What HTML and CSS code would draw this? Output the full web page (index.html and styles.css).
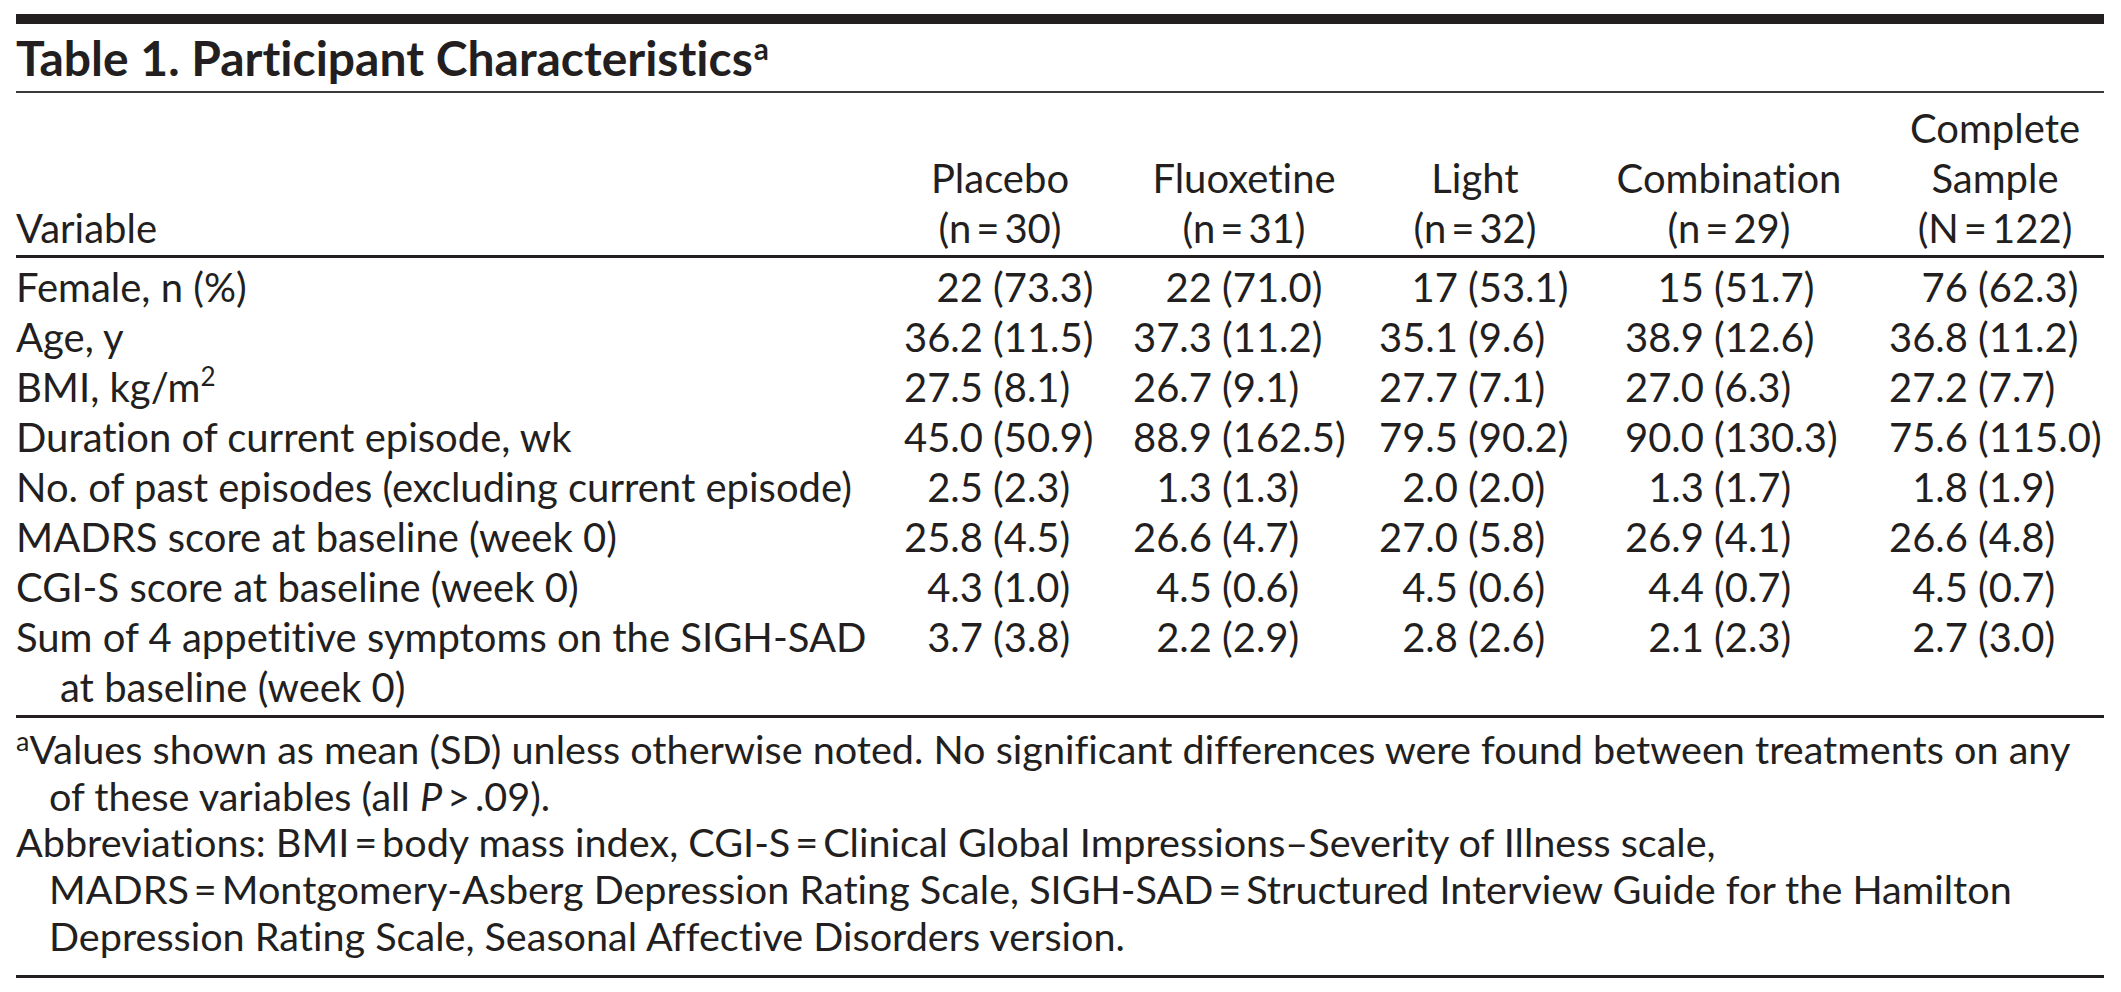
FILE: index.html
```html
<!DOCTYPE html>
<html lang="en">
<head>
<meta charset="utf-8">
<title>Table 1. Participant Characteristics</title>
<link rel="stylesheet" href="styles.css">
</head>
<body>
<div class="table">
  <div class="topbar"></div>
  <h1 class="title">Table 1. Participant Characteristics<sup class="tsup">a</sup></h1>

  <div class="row head">
    <div class="hvar">Variable</div>
    <div class="hcol">Placebo<br>(n&#8201;=&#8201;30)</div>
    <div class="hcol">Fluoxetine<br>(n&#8201;=&#8201;31)</div>
    <div class="hcol">Light<br>(n&#8201;=&#8201;32)</div>
    <div class="hcol">Combination<br>(n&#8201;=&#8201;29)</div>
    <div class="hcol">Complete<br>Sample<br>(N&#8201;=&#8201;122)</div>
  </div>

  <div class="body">
    <div class="row">
      <div class="var">Female, n (%)</div>
      <div class="num c1"><span class="m">22</span><span class="s">(73.3)</span></div>
      <div class="num c2"><span class="m">22</span><span class="s">(71.0)</span></div>
      <div class="num c3"><span class="m">17</span><span class="s">(53.1)</span></div>
      <div class="num c4"><span class="m">15</span><span class="s">(51.7)</span></div>
      <div class="num c5"><span class="m">76</span><span class="s">(62.3)</span></div>
    </div>
    <div class="row">
      <div class="var">Age, y</div>
      <div class="num c1"><span class="m">36.2</span><span class="s">(11.5)</span></div>
      <div class="num c2"><span class="m">37.3</span><span class="s">(11.2)</span></div>
      <div class="num c3"><span class="m">35.1</span><span class="s">(9.6)</span></div>
      <div class="num c4"><span class="m">38.9</span><span class="s">(12.6)</span></div>
      <div class="num c5"><span class="m">36.8</span><span class="s">(11.2)</span></div>
    </div>
    <div class="row">
      <div class="var">BMI, kg/m<sup class="vsup">2</sup></div>
      <div class="num c1"><span class="m">27.5</span><span class="s">(8.1)</span></div>
      <div class="num c2"><span class="m">26.7</span><span class="s">(9.1)</span></div>
      <div class="num c3"><span class="m">27.7</span><span class="s">(7.1)</span></div>
      <div class="num c4"><span class="m">27.0</span><span class="s">(6.3)</span></div>
      <div class="num c5"><span class="m">27.2</span><span class="s">(7.7)</span></div>
    </div>
    <div class="row">
      <div class="var">Duration of current episode, wk</div>
      <div class="num c1"><span class="m">45.0</span><span class="s">(50.9)</span></div>
      <div class="num c2"><span class="m">88.9</span><span class="s">(162.5)</span></div>
      <div class="num c3"><span class="m">79.5</span><span class="s">(90.2)</span></div>
      <div class="num c4"><span class="m">90.0</span><span class="s">(130.3)</span></div>
      <div class="num c5"><span class="m">75.6</span><span class="s">(115.0)</span></div>
    </div>
    <div class="row">
      <div class="var">No. of past episodes (excluding current episode)</div>
      <div class="num c1"><span class="m">2.5</span><span class="s">(2.3)</span></div>
      <div class="num c2"><span class="m">1.3</span><span class="s">(1.3)</span></div>
      <div class="num c3"><span class="m">2.0</span><span class="s">(2.0)</span></div>
      <div class="num c4"><span class="m">1.3</span><span class="s">(1.7)</span></div>
      <div class="num c5"><span class="m">1.8</span><span class="s">(1.9)</span></div>
    </div>
    <div class="row">
      <div class="var">MADRS score at baseline (week 0)</div>
      <div class="num c1"><span class="m">25.8</span><span class="s">(4.5)</span></div>
      <div class="num c2"><span class="m">26.6</span><span class="s">(4.7)</span></div>
      <div class="num c3"><span class="m">27.0</span><span class="s">(5.8)</span></div>
      <div class="num c4"><span class="m">26.9</span><span class="s">(4.1)</span></div>
      <div class="num c5"><span class="m">26.6</span><span class="s">(4.8)</span></div>
    </div>
    <div class="row">
      <div class="var">CGI-S score at baseline (week 0)</div>
      <div class="num c1"><span class="m">4.3</span><span class="s">(1.0)</span></div>
      <div class="num c2"><span class="m">4.5</span><span class="s">(0.6)</span></div>
      <div class="num c3"><span class="m">4.5</span><span class="s">(0.6)</span></div>
      <div class="num c4"><span class="m">4.4</span><span class="s">(0.7)</span></div>
      <div class="num c5"><span class="m">4.5</span><span class="s">(0.7)</span></div>
    </div>
    <div class="row">
      <div class="var hang">Sum of 4 appetitive symptoms on the SIGH-SAD<br>at baseline (week 0)</div>
      <div class="num c1"><span class="m">3.7</span><span class="s">(3.8)</span></div>
      <div class="num c2"><span class="m">2.2</span><span class="s">(2.9)</span></div>
      <div class="num c3"><span class="m">2.8</span><span class="s">(2.6)</span></div>
      <div class="num c4"><span class="m">2.1</span><span class="s">(2.3)</span></div>
      <div class="num c5"><span class="m">2.7</span><span class="s">(3.0)</span></div>
    </div>
  </div>

  <div class="notes">
    <p class="note"><sup class="nsup">a</sup>Values shown as mean (SD) unless otherwise noted. No significant differences were found between treatments on any<br>of these variables (all <i>P</i>&#8201;&gt;&#8201;.09).</p>
    <p class="note">Abbreviations: BMI&#8201;=&#8201;body mass index, CGI-S&#8201;=&#8201;Clinical Global Impressions–Severity of Illness scale,<br>MADRS&#8201;=&#8201;Montgomery-Asberg Depression Rating Scale, SIGH-SAD&#8201;=&#8201;Structured Interview Guide for the Hamilton<br>Depression Rating Scale, Seasonal Affective Disorders version.</p>
  </div>
</div>
</body>
</html>
```
FILE: styles.css
```css
html, body {
  margin: 0;
  padding: 0;
  background: #ffffff;
}

body {
  color: #231f20;
  font-family: "Lato", "Liberation Sans", sans-serif;
  font-size: 40px;
  font-variant-numeric: tabular-nums lining-nums;
  font-variant-ligatures: no-common-ligatures no-discretionary-ligatures;
  font-feature-settings: "liga" 0, "clig" 0, "dlig" 0;
}

.table {
  width: 2088px;
  margin-left: 16px;
  padding-top: 14px;
}

.topbar {
  height: 10px;
  background: #231f20;
}

.title {
  margin: 4px 0 0 0;
  padding-bottom: 3px;
  font-size: 48px;
  line-height: 60px;
  font-weight: 700;
  border-bottom: 2px solid #3a3a3a;
  white-space: nowrap;
}

.tsup {
  font-size: 0.62em;
  line-height: 0;
  vertical-align: 0.55em;
  font-weight: 700;
  margin-left: 1px;
}

.row {
  display: grid;
  grid-template-columns: 874px 220px 268px 194px 314px 218px;
  line-height: 50px;
}

.head {
  align-items: end;
  padding-top: 10px;
  padding-bottom: 2px;
  border-bottom: 3px solid #231f20;
}

.hvar {
  text-align: left;
}

.hcol {
  text-align: center;
  white-space: nowrap;
}

.body {
  padding-top: 4px;
  padding-bottom: 3px;
  border-bottom: 3px solid #231f20;
}

.var {
  white-space: nowrap;
}

.hang {
  padding-left: 44px;
  text-indent: -44px;
}

.vsup {
  font-size: 0.65em;
  line-height: 0;
  vertical-align: 0.6em;
}

.num {
  white-space: nowrap;
}

.m {
  display: inline-block;
  width: 80px;
  text-align: right;
}

.s {
  margin-left: 10px;
}

.c1 { padding-left: 13px; }
.c2 { padding-left: 22px; }
.c3 { padding-left: 0; }
.c4 { padding-left: 52px; }
.c5 { padding-left: 2px; }

.notes {
  padding-top: 8px;
  padding-bottom: 15px;
  border-bottom: 3px solid #231f20;
}

.note {
  margin: 0;
  font-size: 39.6px;
  line-height: 46.7px;
  padding-left: 33px;
  text-indent: -33px;
  white-space: nowrap;
}

.nsup {
  font-size: 0.68em;
  line-height: 0;
  vertical-align: 0.5em;
}
```
